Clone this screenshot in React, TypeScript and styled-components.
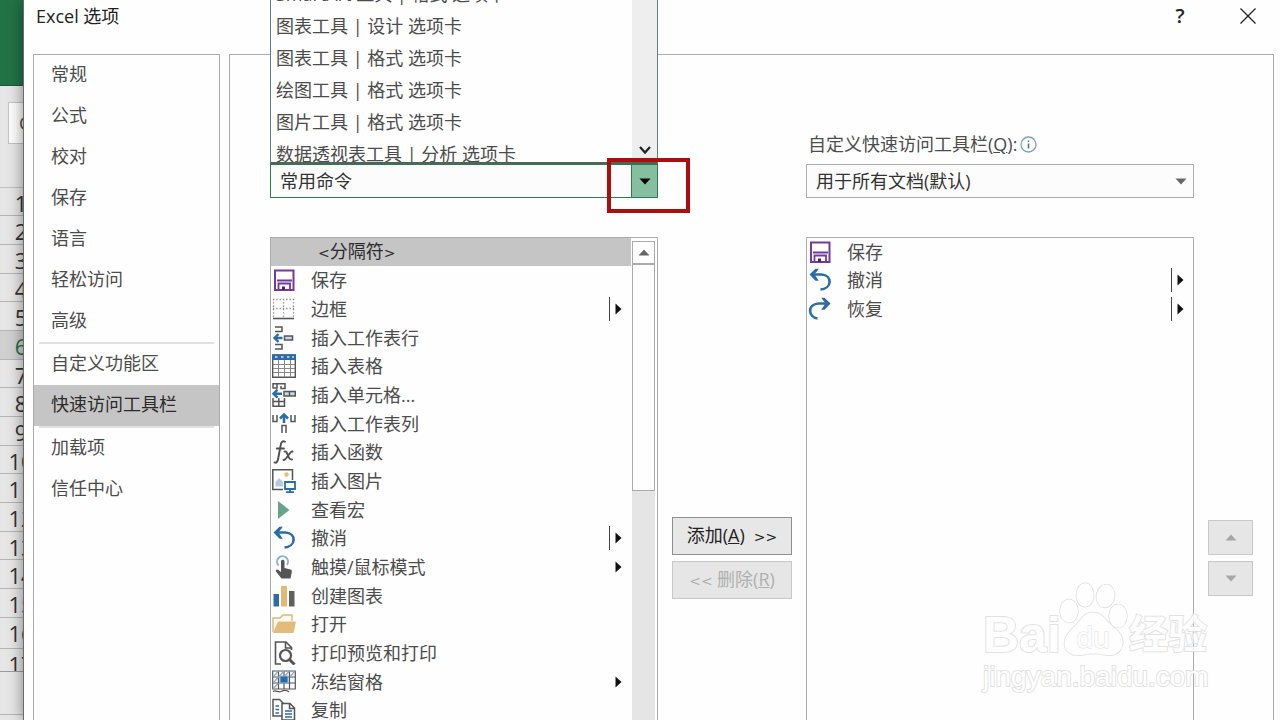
import React from "react";
import styled, { createGlobalStyle } from "styled-components";

const GlobalStyle = createGlobalStyle`
  *, *::before, *::after { box-sizing: border-box; }
  body {
    margin: 0;
    background: #fefefe;
    color: #4c4c4c;
    font-family: "Open Sans", "Noto Sans CJK SC", sans-serif;
    font-size: 18px;
    line-height: 28px;
  }
  button, select { font: inherit; color: inherit; }
  ul { list-style: none; margin: 0; padding: 0; }
`;

const Page = styled.div`
  position: relative;
  display: flex;
  height: 100vh;
  overflow: hidden;
`;

/* ---------- worksheet behind the dialog ---------- */

const Sheet = styled.aside`
  flex: none;
  width: 23px;
  overflow: hidden;
  background: #e6e6e6;
`;

const Ribbon = styled.div`
  height: 86px;
  background: #217346;
  border-bottom: 1px solid #185a35;
`;

const NameBox = styled.div`
  width: 90px;
  height: 42px;
  margin: 16px 0 43px 8px;
  padding-left: 10px;
  border: 1px solid #c3c3c3;
  background: #fcfcfc;
  line-height: 40px;
`;

const RowHeaders = styled.ol`
  display: grid;
  grid-template-rows: repeat(auto-fill, 28px 29px 29px);
  width: 42px;
  height: 485px;
  margin: 0;
  padding: 0;
  list-style: none;
  border-top: 1px solid #c0c0c0;
  border-bottom: 1px solid #9c9c9c;
  overflow: hidden;
`;

const RowHeader = styled.li<{ $active?: boolean }>`
  border-bottom: 1px solid #b5b5b5;
  background: ${(p) => (p.$active ? "#d0d0d0" : "transparent")};
  color: ${(p) => (p.$active ? "#217346" : "#333")};
  font-size: 22px;
  line-height: 30px;
  text-align: center;
`;

const SheetTabs = styled.div`
  height: 43px;
  border-bottom: 1px solid #b5b5b5;
`;

/* ---------- dialog frame ---------- */

const Dialog = styled.section`
  position: relative;
  flex: 1;
  min-width: 0;
  display: flex;
  flex-direction: column;
  border-left: 1px solid #6a6a6a;
  background: #fefefe;
  box-shadow: 0 0 14px rgba(0, 0, 0, 0.45);
`;

const TitleBar = styled.header`
  flex: none;
  display: flex;
  align-items: flex-start;
  height: 54px;
  padding: 0 16px 0 12px;
`;

const Title = styled.h1`
  flex: 1;
  margin: 0;
  font-size: 18px;
  font-weight: 400;
  line-height: 32px;
  color: #222;
`;

const TitleButton = styled.button`
  display: flex;
  align-items: center;
  justify-content: center;
  width: 32px;
  height: 32px;
  margin-left: 36px;
  padding: 0;
  border: 0;
  background: none;
  color: #222;
  font-size: 20px;
  font-weight: 600;
`;

const Body = styled.div`
  flex: 1;
  display: flex;
  gap: 9px;
  padding: 0 6px 0 9px;
`;

const Nav = styled.nav`
  flex: none;
  width: 187px;
  border: 1px solid #ababab;
  border-bottom: 0;
`;

const NavItem = styled.button<{ $active?: boolean }>`
  display: block;
  width: 100%;
  height: 41px;
  padding: 0 17px 3px;
  border: 0;
  background: ${(p) => (p.$active ? "#c5c5c5" : "none")};
  color: ${(p) => (p.$active ? "#2b2b2b" : "#4c4c4c")};
  text-align: left;
`;

const NavDivider = styled.hr`
  height: 2px;
  margin: 0 5px;
  border: 0;
  background: #e1e1e1;
`;

const Panel = styled.main`
  flex: 1;
  min-width: 0;
  display: grid;
  grid-template-columns: minmax(0, 1fr) 120px minmax(0, 1fr) 45px;
  grid-template-rows: 109px 34px 39px minmax(642px, auto);
  column-gap: 14px;
  padding: 0 20px 0 40px;
  border: 1px solid #ababab;
  border-bottom: 0;
`;

/* ---------- drop-downs ---------- */

const FieldLabel = styled.label`
  grid-column: 3;
  grid-row: 1;
  align-self: end;
  display: flex;
  align-items: center;
  gap: 3px;
  padding: 0 0 6px 2px;
`;

const Field = styled.div<{ $column: number }>`
  position: relative;
  grid-column: ${(p) => p.$column};
  grid-row: 2;
  display: flex;
`;

const Select = styled.select<{ $open?: boolean }>`
  appearance: none;
  width: 100%;
  height: 34px;
  padding: 0 36px 0 9px;
  border: 1px solid ${(p) => (p.$open ? "#2f7a50" : "#ababab")};
  border-radius: 0;
  background: #fcfcfc;
  color: #333;
`;

const SelectArrow = styled.span<{ $open?: boolean }>`
  position: absolute;
  top: 1px;
  right: 1px;
  bottom: 1px;
  display: flex;
  align-items: center;
  justify-content: center;
  width: 26px;
  border-left: 1px solid ${(p) => (p.$open ? "#2f7a50" : "transparent")};
  background: ${(p) => (p.$open ? "#86bf9f" : "transparent")};
  color: ${(p) => (p.$open ? "#000" : "#666")};
  pointer-events: none;
`;

const Popup = styled.div`
  position: absolute;
  left: 0;
  right: 0;
  bottom: 100%;
  display: flex;
  height: 186px;
  overflow: hidden;
  border: 1px solid #6c7a80;
  border-bottom: 2px solid #4d6659;
  background: #fefefe;
`;

const PopupList = styled.ul`
  flex: 1;
  padding-left: 5px;
`;

const PopupItem = styled.li`
  height: 32px;
  line-height: 30px;
  white-space: nowrap;
`;

const PopupScroll = styled.div`
  display: flex;
  align-items: flex-end;
  justify-content: center;
  width: 25px;
  padding-bottom: 6px;
  background: #eeeeee;
`;

const Highlight = styled.div`
  position: absolute;
  top: -6px;
  right: -32px;
  width: 83px;
  height: 55px;
  border: 4px solid #ac0d0d;
  pointer-events: none;
`;

/* ---------- command lists ---------- */

const ListBox = styled.div<{ $column: number }>`
  grid-column: ${(p) => p.$column};
  grid-row: 4;
  display: flex;
  border: 1px solid #ababab;
`;

const Commands = styled.ul`
  flex: 1;
  min-width: 0;
  display: grid;
  grid-template-rows: repeat(auto-fill, 28px 29px 29px);
  align-content: start;
`;

const Command = styled.li<{ $selected?: boolean; $iconless?: boolean }>`
  display: flex;
  align-items: center;
  gap: 15px;
  padding: 0 9px 1px ${(p) => (p.$iconless ? 47 : 1)}px;
  background: ${(p) => (p.$selected ? "#c5c5c5" : "none")};
  color: ${(p) => (p.$selected ? "#2b2b2b" : "#4c4c4c")};
  white-space: nowrap;
`;

const CommandName = styled.span`
  flex: 1;
`;

const Angle = styled.span`
  font-family: "DejaVu Sans", sans-serif;
  font-size: 14px;
`;

const Submenu = styled.span<{ $split?: boolean }>`
  display: flex;
  align-items: center;
  justify-content: flex-end;
  width: 13px;
  height: 24px;
  border-left: 1px solid ${(p) => (p.$split ? "#444" : "transparent")};
`;

const Scrollbar = styled.div`
  flex: none;
  width: 23px;
  margin: 3px 2px 0 1px;
  background: #e5e5e5;
`;

const ScrollUp = styled.button`
  display: flex;
  align-items: center;
  justify-content: center;
  width: 100%;
  height: 23px;
  padding: 0;
  border: 1px solid #ababab;
  background: #fefefe;
  color: #666;
`;

const Thumb = styled.div`
  height: 227px;
  border: 1px solid #ababab;
  background: #fefefe;
`;

/* ---------- action buttons ---------- */

const Actions = styled.div<{ $column: number }>`
  grid-column: ${(p) => p.$column};
  grid-row: 4;
  align-self: center;
  display: flex;
  flex-direction: column;
  gap: 6px;
`;

const ActionButton = styled.button`
  height: 38px;
  padding: 0;
  border: 1px solid #8f8f8f;
  background: #e7e7e7;
  color: #222;
  white-space: pre;
  &:disabled { border-color: #c8c8c8; background: #e6e6e6; color: #b0b0b0; }
`;

const MoveButton = styled.button`
  display: flex;
  align-items: center;
  justify-content: center;
  height: 35px;
  padding: 0;
  border: 1px solid #c8c8c8;
  background: #e6e6e6;
  color: #a6a6a6;
`;

/* ---------- watermark ---------- */

const Watermark = styled.div`
  position: absolute;
  right: 69px;
  bottom: 26px;
  width: 228px;
  color: #fefefe;
  font-family: "Liberation Sans", "Noto Sans CJK SC", sans-serif;
  -webkit-text-stroke: 2px #dedede;
  paint-order: stroke fill;
  opacity: 0.85;
  pointer-events: none;
`;

const WatermarkTop = styled.div`
  display: flex;
  align-items: flex-end;
  height: 80px;
  font-weight: 700;
  white-space: nowrap;
`;

const WatermarkBai = styled.span`
  flex: none;
  width: 74px;
  font-size: 50px;
  line-height: 50px;
`;

const WatermarkCjk = styled.span`
  font-size: 39px;
  line-height: 50px;
`;

const WatermarkUrl = styled.div`
  font-size: 28px;
  line-height: 34px;
`;

const PawDrawing = styled.svg`
  flex: none;
`;

/* ---------- drawings ---------- */

const Triangle = ({ dir }: { dir: "up" | "down" | "right" }) => {
  if (dir === "right")
    return (
      <svg width="7" height="12" viewBox="0 0 7 12" aria-hidden="true">
        <path d="M0.500 0.500 6.500 6 0.500 11.500z" fill="#111" />
      </svg>
    );
  return (
    <svg width="12" height="7" viewBox="0 0 12 7" aria-hidden="true">
      <path d={dir === "up" ? "M0.500 6.500H11.500L6 0.500z" : "M0.500 0.500H11.500L6 6.500z"} fill="currentColor" />
    </svg>
  );
};

const blue = "#2a6ca8";
const ink = "#555";

const icons: Record<string, React.ReactNode> = {
  save: (
    <g fill="none" stroke="#73399b">
      <path d="M3 2.500H21.500V22H3z" strokeWidth="2" />
      <path d="M5 12.500H20M6.500 22V15.500H18V22" strokeWidth="1.800" />
      <path d="M11.500 18.500V22" strokeWidth="3" stroke="#4a2368" />
    </g>
  ),
  border: (
    <g stroke="#888" strokeWidth="1.300" fill="none">
      <path d="M1 2.500H22M1 11.500H22M1.500 2V21M11.500 2V21M21.500 2V21" strokeDasharray="1.300 2" />
      <path d="M1 21.500H22" stroke="#555" strokeWidth="1.600" />
    </g>
  ),
  row: (
    <g fill="none" stroke={ink} strokeWidth="1.500">
      <path d="M3 1H10V5.500H3M3 18.500H10V23H3" />
      <path d="M12.500 10H20.500V14H12.500z" fill="#c5d9ea" />
      <path d="M10.500 12H2.500M6.500 8 2.500 12 6.500 16" stroke={blue} strokeWidth="2.400" />
    </g>
  ),
  table: (
    <g>
      <path d="M0.700 1H23.300V23.300H0.700z" fill="#fff" stroke={ink} strokeWidth="1.400" />
      <path d="M0 0.500H24V6H0z" fill={blue} />
      <path d="M3 3h2.500M9 3h2.500M15 3h2.500M20 3h2" stroke="#cfe0ef" strokeWidth="1.500" />
      <path d="M1 10.500H23M1 14.500H23M1 18.500H23M6.500 6V23M12.500 6V23M18.500 6V23" stroke="#888" fill="none" />
    </g>
  ),
  cell: (
    <g fill="none" stroke={ink} strokeWidth="1.500">
      <path d="M1 5.500V0.800H13V5.500H9V3M1 5H5V1M1 15V23.200H12.500V15M1 18.500H12.500M6.800 15V23" />
      <path d="M12 8.500H23.300V13H12zM17.500 9V13" fill="#c5d9ea" />
      <path d="M10 10.700H1.500M5.500 6.700 1.500 10.700 5.500 14.700" stroke={blue} strokeWidth="2.400" />
    </g>
  ),
  column: (
    <g fill="none" stroke={ink} strokeWidth="1.500">
      <path d="M1 3V9.500H5V3M19 3V9.500H23V3M10 21V13.500H14V21" />
      <path d="M12 11V2.500M8 6.500 12 2.500 16 6.500" stroke={blue} strokeWidth="2.600" />
    </g>
  ),
  fx: (
    <g fill="none" stroke="#505050" strokeWidth="1.900" strokeLinecap="round">
      <path d="M13 1.800C10.500 0 9 2.500 8.500 6L6.300 18C5.700 21.500 4.500 23.500 2.500 22.500M4.800 8.500H12" />
      <path d="M12.500 11.500C16 10 15.500 20.500 20 19.500M20.500 11.500C17.500 11 14.500 20.500 11.500 20" />
    </g>
  ),
  picture: (
    <g fill="none">
      <path d="M11 20.500H0.800V0.800H20.500V11" stroke={ink} strokeWidth="1.500" />
      <circle cx="14.500" cy="5.500" r="2.200" fill="#e6bd7c" />
      <path d="M3.500 17.500V13L7 9 11 13V17.500z" fill="#b4cbe0" />
      <path d="M13 13H23V20H13zM18 20V23M14 23.200H22" stroke={blue} strokeWidth="1.800" fill="#fefefe" />
    </g>
  ),
  macro: <path d="M6 3 17.500 12 6 21z" fill="#66a58c" />,
  undo: (
    <g fill={blue}>
      <path d="M5 6.500H13.500C25 7.500 24 20.500 12.500 21.500" fill="none" stroke={blue} strokeWidth="2.600" />
      <path d="M1.500 6.500 7.500 0.800H10.800L6.500 6.500 10.800 12.800H7.500z" />
    </g>
  ),
  redo: (
    <g fill={blue}>
      <path d="M19 6.500H10.500C-1 7.500 0 20 9.500 21.500" fill="none" stroke={blue} strokeWidth="2.600" />
      <path d="M22.500 6.500 16.500 0.800H13.200L17.500 6.500 13.200 12.800H16.500z" />
    </g>
  ),
  touch: (
    <g>
      <path d="M6.500 10.500A5.500 5.500 0 1 1 15 10" fill="none" stroke="#8eb2d2" strokeWidth="2" />
      <path
        d="M9 6.500c0-2.200 3.500-2.200 3.500 0V13l6 1.500c1.500.5 1.500 1.500 1.200 3L18.500 23.500H9.500L4 16.500c-.8-1.500 1-2.800 2.500-1.500L9 17z"
        fill="#555"
      />
    </g>
  ),
  chart: (
    <g>
      <path d="M1.500 10H7V22.500H1.500z" fill={blue} />
      <path d="M9 2H15V22.500H9z" fill="#e3b975" />
      <path d="M17 7H22.500V22.500H17z" fill="#606060" />
    </g>
  ),
  open: (
    <g>
      <path d="M1 20V6H8L11 3H20V9" fill="#fffaf0" stroke="#dfb777" strokeWidth="1.400" />
      <path d="M6 9.500H24L21.500 21H1z" fill="#e3bc7c" />
    </g>
  ),
  preview: (
    <g fill="none" stroke="#555" strokeWidth="1.600">
      <path d="M9 23H3.500V1H14L19.500 6.500V9M13.500 1.500V7H19" />
      <circle cx="13.500" cy="14.500" r="5.500" strokeWidth="2.200" />
      <path d="M17.500 18.500 22.500 23.500" strokeWidth="3" />
    </g>
  ),
  freeze: (
    <g fill="none" stroke={ink} strokeWidth="1.200">
      <path d="M0.700 1H23.300V19H0.700zM6.500 1V19M12 1V19M17.500 1V19M0.700 7H23.300M0.700 13H23.300" />
      <path d="M1 7 6.500 1M6.500 7 12 1M12 7 17.500 1M18 7 23 1M1 13 6.500 7M1 19 6.500 13" stroke="#8aa6bd" />
      <path d="M8 6H16V13H8z" fill={blue} stroke="#8eb2d2" />
      <path d="M1 21.500C4 19.500 6 23 9 21.500S15 20 17 22" />
    </g>
  ),
  copy: (
    <g fill="#fefefe" stroke={ink} strokeWidth="1.500">
      <path d="M1 1.500H7.500L11 5V18H1z" />
      <path d="M3.500 8H7M3.500 11.500H7M3.500 15H7" stroke={blue} />
      <path d="M10 5.500H18L22.500 10V22H10zM17.500 6V10.500H22" />
      <path d="M13 13H20M13 16H20M13 19H20" stroke={blue} />
    </g>
  ),
};

const CommandIcon = ({ name }: { name: string }) => (
  <svg width="24" height="24" viewBox="0 0 24 24" aria-hidden="true">
    {icons[name]}
  </svg>
);

const Info = () => (
  <svg width="17" height="17" viewBox="0 0 17 17" role="img" aria-label="信息">
    <circle cx="8.500" cy="8.500" r="7.500" fill="#fbfdff" stroke="#7d9fb8" strokeWidth="1.300" />
    <path d="M8.500 7.500V12.500M8.500 4.500V6" stroke="#3f7197" strokeWidth="1.500" />
  </svg>
);

const Paw = () => (
  <PawDrawing width="72" height="80" viewBox="0 0 72 80" role="img" aria-label="du">
    <g fill="#fefefe" stroke="#d9d9d9" strokeWidth="1.500">
      <ellipse cx="12" cy="31" rx="9" ry="11.500" />
      <ellipse cx="28" cy="15" rx="8.700" ry="11.800" />
      <ellipse cx="48.500" cy="16" rx="9" ry="11.500" transform="rotate(10 48.500 16)" />
      <ellipse cx="61" cy="36" rx="9" ry="11.500" />
      <path d="M36 32.500C46 32.500 48 40 54 45C62 51 68 58 65 66C62 76 53 76 46 74.500C39 73 35 73 28 74.500C20 76 11 76 8 67C6 59 11 52 18 46C25 40 26 32.500 36 32.500z" />
      <text x="36" y="68" textAnchor="middle" fontSize="30" fontWeight="400" strokeWidth="1">
        du
      </text>
    </g>
  </PawDrawing>
);

/* ---------- data ---------- */

const navGroups = [
  ["常规", "公式", "校对", "保存", "语言", "轻松访问", "高级"],
  ["自定义功能区", "快速访问工具栏"],
  ["加载项", "信任中心"],
];
const activeNav = "快速访问工具栏";

const tabSources = [
  "SmartArt 工具 | 格式 选项卡",
  "图表工具 | 设计 选项卡",
  "图表工具 | 格式 选项卡",
  "绘图工具 | 格式 选项卡",
  "图片工具 | 格式 选项卡",
  "数据透视表工具 | 分析 选项卡",
];

type Cmd = { name: string; icon?: string; menu?: "split" | "plain"; selected?: boolean };

const available: Cmd[] = [
  { name: "分隔符", selected: true },
  { name: "保存", icon: "save" },
  { name: "边框", icon: "border", menu: "split" },
  { name: "插入工作表行", icon: "row" },
  { name: "插入表格", icon: "table" },
  { name: "插入单元格...", icon: "cell" },
  { name: "插入工作表列", icon: "column" },
  { name: "插入函数", icon: "fx" },
  { name: "插入图片", icon: "picture" },
  { name: "查看宏", icon: "macro" },
  { name: "撤消", icon: "undo", menu: "split" },
  { name: "触摸/鼠标模式", icon: "touch", menu: "plain" },
  { name: "创建图表", icon: "chart" },
  { name: "打开", icon: "open" },
  { name: "打印预览和打印", icon: "preview" },
  { name: "冻结窗格", icon: "freeze", menu: "plain" },
  { name: "复制", icon: "copy" },
];

const chosen: Cmd[] = [
  { name: "保存", icon: "save" },
  { name: "撤消", icon: "undo", menu: "split" },
  { name: "恢复", icon: "redo", menu: "split" },
];

const CommandList = ({ items, label }: { items: Cmd[]; label: string }) => (
  <Commands role="listbox" aria-label={label}>
    {items.map((c) => (
      <Command
        key={c.name}
        role="option"
        aria-selected={!!c.selected}
        $selected={c.selected}
        $iconless={!c.icon}
      >
        {c.icon && <CommandIcon name={c.icon} />}
        <CommandName>
          {c.icon ? (
            c.name
          ) : (
            <>
              <Angle>&lt;</Angle>
              {c.name}
              <Angle>&gt;</Angle>
            </>
          )}
        </CommandName>
        {c.menu && (
          <Submenu $split={c.menu === "split"}>
            <Triangle dir="right" />
          </Submenu>
        )}
      </Command>
    ))}
  </Commands>
);

export default function App() {
  return (
    <Page>
      <GlobalStyle />
      <Sheet>
        <Ribbon />
        <NameBox>C6</NameBox>
        <RowHeaders>
          {Array.from({ length: 17 }, (_, i) => (
            <RowHeader key={i} $active={i === 5}>
              {i + 1}
            </RowHeader>
          ))}
        </RowHeaders>
        <SheetTabs />
      </Sheet>

      <Dialog role="dialog" aria-labelledby="dialog-title">
        <TitleBar>
          <Title id="dialog-title">Excel 选项</Title>
          <TitleButton aria-label="帮助">?</TitleButton>
          <TitleButton aria-label="关闭">
            <svg width="16" height="16" viewBox="0 0 16 16" aria-hidden="true">
              <path d="M0.500 0.500 15.500 15.500M15.500 0.500 0.500 15.500" stroke="#222" strokeWidth="1.300" />
            </svg>
          </TitleButton>
        </TitleBar>

        <Body>
          <Nav>
            {navGroups.map((group, i) => (
              <React.Fragment key={i}>
                {i > 0 && <NavDivider />}
                {group.map((name) => (
                  <NavItem key={name} $active={name === activeNav}>
                    {name}
                  </NavItem>
                ))}
              </React.Fragment>
            ))}
          </Nav>

          <Panel>
            <Field $column={1}>
              <Select $open aria-label="从下列位置选择命令" defaultValue="常用命令">
                <option>常用命令</option>
              </Select>
              <SelectArrow $open>
                <Triangle dir="down" />
              </SelectArrow>
              <Popup>
                <PopupList>
                  {tabSources.map((s) => (
                    <PopupItem key={s}>{s}</PopupItem>
                  ))}
                </PopupList>
                <PopupScroll>
                  <svg width="12" height="12" viewBox="0 0 12 12" aria-hidden="true">
                    <path d="M1 3 6 8.500 11 3" fill="none" stroke="#222" strokeWidth="2.200" />
                  </svg>
                </PopupScroll>
              </Popup>
              <Highlight />
            </Field>

            <FieldLabel htmlFor="toolbar-scope">
              <span>
                自定义快速访问工具栏(<u>Q</u>):
              </span>
              <Info />
            </FieldLabel>
            <Field $column={3}>
              <Select id="toolbar-scope" defaultValue="用于所有文档(默认)">
                <option>用于所有文档(默认)</option>
              </Select>
              <SelectArrow>
                <Triangle dir="down" />
              </SelectArrow>
            </Field>

            <ListBox $column={1}>
              <CommandList items={available} label="可用命令" />
              <Scrollbar>
                <ScrollUp aria-label="向上滚动">
                  <Triangle dir="up" />
                </ScrollUp>
                <Thumb />
              </Scrollbar>
            </ListBox>

            <Actions $column={2}>
              <ActionButton>
                添加(<u>A</u>) <Angle> &gt;&gt;</Angle>
              </ActionButton>
              <ActionButton disabled>
                <Angle>&lt;&lt; </Angle>删除(<u>R</u>)
              </ActionButton>
            </Actions>

            <ListBox $column={3}>
              <CommandList items={chosen} label="快速访问工具栏" />
            </ListBox>

            <Actions $column={4}>
              <MoveButton disabled aria-label="上移">
                <Triangle dir="up" />
              </MoveButton>
              <MoveButton disabled aria-label="下移">
                <Triangle dir="down" />
              </MoveButton>
            </Actions>
          </Panel>
        </Body>
      </Dialog>

      <Watermark>
        <WatermarkTop>
          <WatermarkBai>Bai</WatermarkBai>
          <Paw />
          <WatermarkCjk>经验</WatermarkCjk>
        </WatermarkTop>
        <WatermarkUrl>jingyan.baidu.com</WatermarkUrl>
      </Watermark>
    </Page>
  );
}
